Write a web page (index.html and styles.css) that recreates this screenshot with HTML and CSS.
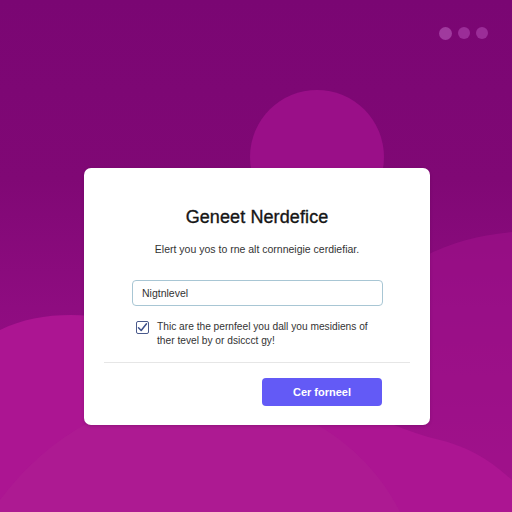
FILE: index.html
```html
<!DOCTYPE html>
<html>
<head>
<meta charset="utf-8">
<link rel="stylesheet" href="styles.css">
</head>
<body>
<div class="bg">
  <svg class="waves" width="512" height="512" viewBox="0 0 512 512">
    <path d="M512 232 C420 240 360 290 330 360 C310 420 380 470 512 500 Z" fill="#a2128c" opacity="0.55"/>
    <path d="M0 330 C60 300 140 320 220 345 C300 370 360 420 440 440 C480 450 500 470 512 480 L512 512 L0 512 Z" fill="#ac1592"/>
    <path d="M0 500 C60 420 150 380 250 400 C330 415 380 470 400 512 L0 512 Z" fill="#b02294" opacity="0.4"/>
    <circle cx="317" cy="157" r="67" fill="#9a0f88"/>
  </svg>
  <div class="dots"><span></span><span></span><span></span></div>
  <div class="stage">
    <div class="card">
      <h1 class="title">Geneet Nerdefice</h1>
      <p class="sub">Elert you yos to rne alt cornneigie cerdiefiar.</p>
      <div class="field">Nigtnlevel</div>
      <label class="check">
        <span class="box"><svg width="11" height="11" viewBox="0 0 11 11"><path d="M1.5 5.8 L4.2 8.5 L9.5 1.8" fill="none" stroke="#3c4f8a" stroke-width="1.5" stroke-linecap="round" stroke-linejoin="round"/></svg></span>
        <span class="ctext">Thic are the pernfeel you dall you mesidiens of ther tevel by or dsiccct gy!</span>
      </label>
      <div class="divider"></div>
      <div class="actions"><button class="btn">Cer forneel</button></div>
    </div>
  </div>
</div>
</body>
</html>
```

FILE: styles.css
```css
* { box-sizing: border-box; }
html, body { margin: 0; padding: 0; }
body { font-family: "Liberation Sans", Arial, sans-serif; }
.bg {
  position: relative;
  width: 512px;
  height: 512px;
  overflow: hidden;
  background: linear-gradient(180deg, #7a0673 0%, #800875 35%, #8e0c80 60%, #a0128a 100%);
}
.waves { position: absolute; left: 0; top: 0; }
.dots {
  position: absolute;
  top: 27px;
  left: 439px;
  display: flex;
  gap: 6px;
}
.dots span {
  width: 12px;
  height: 12px;
  border-radius: 50%;
  background: #9b2d98;
}
.dots span:first-child { width: 13px; height: 13px; background: #a03a9e; }
.stage {
  position: relative;
  padding: 168px 82px 0 84px;
}
.card {
  width: 346px;
  height: 257px;
  background: #fff;
  border-radius: 7px;
  padding: 38px 20px 0 20px;
  box-shadow: 0 1px 3px rgba(60,0,60,0.25);
}
.title {
  margin: 0;
  text-align: center;
  font-size: 18px;
  font-weight: normal;
  color: #161616;
  -webkit-text-stroke: 0.35px #161616;
  letter-spacing: 0.1px;
  line-height: 22px;
}
.sub {
  margin: 14px 0 0;
  text-align: center;
  font-size: 10.5px;
  color: #333;
  line-height: 14px;
}
.field {
  margin: 24px 27px 0 28px;
  height: 26px;
  border: 1px solid #a8c6d4;
  border-radius: 4px;
  font-size: 10.5px;
  color: #333;
  padding: 0 9px;
  display: flex;
  align-items: center;
}
.check {
  display: flex;
  margin: 14px 0 0 32px;
  gap: 8px;
}
.box {
  flex: none;
  width: 13px;
  height: 13px;
  border: 1.5px solid #4a5a8c;
  border-radius: 2px;
  display: flex;
  align-items: center;
  justify-content: center;
  margin-top: 1px;
}
.ctext {
  font-size: 10.2px;
  color: #333;
  line-height: 14px;
  width: 225px;
}
.divider {
  margin: 14px 0 0;
  height: 1px;
  background: #e6e6e6;
}
.actions {
  display: flex;
  justify-content: flex-end;
  padding: 15px 28px 0 0;
}
.btn {
  width: 120px;
  height: 28px;
  border: none;
  border-radius: 4px;
  background: #635af6;
  color: #fff;
  font-family: "Liberation Sans", Arial, sans-serif;
  font-size: 11px;
  font-weight: bold;
}
```
